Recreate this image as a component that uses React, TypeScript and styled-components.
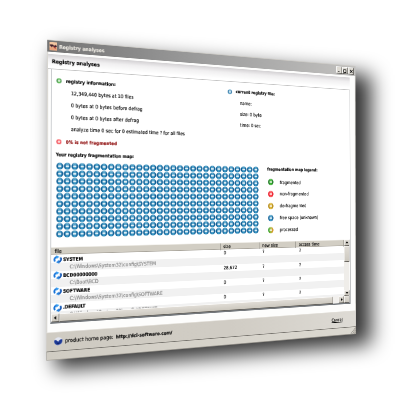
import React from "react";
import styled, { createGlobalStyle } from "styled-components";

const W = 772;
const H = 676;
const ZOOM = 0.625;

type Point = [number, number];

/* Projective transform that carries a flat w x h plane onto four corners (TL, TR, BR, BL). */
function projectTo(w: number, h: number, [p0, p1, p2, p3]: Point[]): string {
  const dx1 = p1[0] - p2[0];
  const dx2 = p3[0] - p2[0];
  const dx3 = p0[0] - p1[0] + p2[0] - p3[0];
  const dy1 = p1[1] - p2[1];
  const dy2 = p3[1] - p2[1];
  const dy3 = p0[1] - p1[1] + p2[1] - p3[1];
  const det = dx1 * dy2 - dx2 * dy1;
  const g = (dx3 * dy2 - dx2 * dy3) / det;
  const k = (dx1 * dy3 - dx3 * dy1) / det;
  const a = p1[0] - p0[0] + g * p1[0];
  const b = p3[0] - p0[0] + k * p3[0];
  const d = p1[1] - p0[1] + g * p1[1];
  const e = p3[1] - p0[1] + k * p3[1];
  const m = [
    a / w, d / w, 0, g / w,
    b / h, e / h, 0, k / h,
    0, 0, 1, 0,
    p0[0], p0[1], 0, 1,
  ];
  return `matrix3d(${m.map((n) => n.toFixed(9)).join(",")})`;
}

const planeTransform = projectTo(W * ZOOM, H * ZOOM, [
  [47.2, 39.4],
  [355.2, 66],
  [355.7, 333.6],
  [46.3, 360.4],
]);

const GlobalStyle = createGlobalStyle`
  html, body { margin: 0; background: #fff; }
  * { box-sizing: border-box; }
`;

const Stage = styled.main`
  position: relative;
  width: 400px;
  height: 400px;
  overflow: hidden;
  background: #fff;
  font-family: "DejaVu Sans Condensed", "DejaVu Sans", sans-serif;
  font-stretch: condensed;
`;

const ShadowBlur = styled.div`
  position: absolute;
  inset: 0;
  filter: blur(10px);
`;

const ShadowShape = styled.div`
  width: 400px;
  height: 400px;
  background: rgba(0, 0, 0, 0.8);
  clip-path: polygon(54px 49px, 371px 75px, 371px 344px, 55px 370px);
`;

const Plane = styled.div`
  position: absolute;
  top: 0;
  left: 0;
  width: ${W * ZOOM}px;
  height: ${H * ZOOM}px;
  transform-origin: 0 0;
  transform: ${planeTransform};
`;

const AppWindow = styled.section`
  zoom: ${ZOOM};
  width: ${W}px;
  height: ${H}px;
  display: flex;
  flex-direction: column;
  background: #fdfdfc;
  box-shadow: inset 2px 0 #d9d7d1, inset -2px 0 #dcdad4;
  color: #000;
  font-size: 11px;
  line-height: 14px;
  white-space: nowrap;
  text-rendering: geometricPrecision;
  -webkit-text-stroke: 0.25px;
`;

const TitleBar = styled.header`
  flex: none;
  height: 26px;
  display: flex;
  align-items: center;
  gap: 4px;
  padding: 0 4px;
  border-top: 1px solid #c9c7c2;
  background: linear-gradient(90deg, #747474, #a0a0a0 50%, #c2c1bf);
  color: #e9e6df;
`;

const Label = styled.span<{ $bold?: boolean; $size?: number; $color?: string }>`
  padding-top: 2px;
  font-weight: ${(p) => (p.$bold ? 700 : 400)};
  font-size: ${(p) => p.$size ?? 11}px;
  color: ${(p) => p.$color ?? "inherit"};
`;

const WindowButtons = styled.div`
  margin-left: auto;
  display: flex;
  gap: 1px;
`;

const Bevel = styled.div`
  width: 17px;
  height: 18px;
  display: grid;
  place-items: center;
  background: #dedbd4;
  border: 2px solid;
  border-color: #fff #55534e #55534e #fff;
`;

const PageHeader = styled.div`
  flex: none;
  height: 31px;
  margin: 5px 17px 0 1px;
  display: flex;
  align-items: center;
  padding-left: 9px;
  border-bottom: 2px solid #c4c4c4;
  background: linear-gradient(#d3d1d3, #f0eff0 35%, #fff 85%);
`;

const Panel = styled.div`
  flex: none;
  height: 538px;
  margin: 0 15px 0 8px;
  display: flex;
  flex-direction: column;
  border-left: 2px solid #b9bcc0;
  border-right: 3px solid #8b8e91;
  border-bottom: 4px solid #74787c;
  background: #fff;
`;

const InfoRow = styled.div`
  height: 172px;
  display: grid;
  grid-template-columns: 399px 1fr;
  padding: 11px 0 0 9px;
`;

const InfoColumn = styled.div`
  display: flex;
  flex-direction: column;
`;

const InfoTitle = styled.div`
  height: 26px;
  display: flex;
  align-items: center;
  gap: 9px;
`;

const InfoLine = styled.div`
  height: 25.8px;
  line-height: 27.5px;
  padding-left: 32px;
`;

const MapHeading = styled.div`
  height: 25px;
  line-height: 21px;
  padding-left: 9px;
`;

const MapRow = styled.div`
  height: 180px;
  display: grid;
  grid-template-columns: 480px 1fr;
  column-gap: 22px;
  padding-left: 10px;
`;

const MapGrid = styled.div`
  display: grid;
  grid-template-columns: repeat(30, 16px);
  grid-auto-rows: 16px;
  height: 160px;
`;

const Legend = styled.div`
  display: flex;
  flex-direction: column;
`;

const LegendItem = styled.div`
  height: 28.5px;
  display: flex;
  align-items: center;
  gap: 17px;
  padding-left: 1px;
`;

const LegendTitle = styled(LegendItem)`
  height: 24px;
  align-items: flex-start;
  padding-left: 0;
`;

const FileList = styled.div`
  flex: none;
  height: 159px;
  display: grid;
  grid-template-columns: 728px 16px;
  grid-template-rows: 142px 17px;
`;

const Table = styled.div`
  overflow: hidden;
`;

const columns = "390px 101px 100px 137px";

const TableHead = styled.div`
  height: 17px;
  display: grid;
  grid-template-columns: ${columns};
  background: #d2cec4;
  border-top: 1px solid #f0eee9;
  border-bottom: 1px solid #aaa69d;
`;

const HeadCell = styled.div`
  padding-left: 7px;
  line-height: 17px;
  border-right: 2px solid #98958d;
`;

const TableRow = styled.div<{ $alt?: boolean }>`
  height: 17px;
  line-height: 18px;
  display: grid;
  grid-template-columns: ${columns};
  background: ${(p) => (p.$alt ? "#f1f1f1" : "#fff")};
`;

const NameCell = styled.div`
  display: flex;
  align-items: center;
  gap: 3px;
  padding-left: 4px;
`;

const PathCell = styled.div`
  padding-left: 39px;
  font-size: 11.3px;
`;

const ValueCell = styled.div`
  padding-left: 8px;
`;

const VScroll = styled.div`
  display: grid;
  grid-template-rows: 16px 40px 1fr 15px;
  background: #efede9;
`;

const HScroll = styled.div`
  display: grid;
  grid-template-columns: 17px 679px 1fr 16px;
  background: #f2f0ed;
`;

const ScrollPart = styled.div`
  display: grid;
  place-items: center;
  background: linear-gradient(#e0dcd5, #ccc8bf);
  border: 1px solid;
  border-color: #faf9f7 #65625c #65625c #faf9f7;
  border-right-width: 2px;
`;

const Footer = styled.footer`
  flex: none;
  height: 41px;
  margin-top: 17px;
  display: flex;
  align-items: center;
  padding: 0 39px 2px 16px;
  background: linear-gradient(90deg, #cfcbc2, #d0ccc4 55%, #dedbd5);
  border-top: 1px solid #e4e1db;
`;

const HomeLink = styled.div`
  display: flex;
  align-items: center;
  gap: 5px;
`;

const CancelLink = styled.a`
  margin-left: auto;
  padding-top: 2px;
  font-size: 10.5px;
  text-decoration: underline;
`;

const StatusBar = styled.div`
  flex: 1;
  display: flex;
  justify-content: flex-end;
  align-items: flex-end;
  background: linear-gradient(90deg, #d0ccc3, #dcd9d1);
  border: 2px solid #aaa69e;
  border-top-color: #77746e;
`;

const palette = {
  blue: ["#0a5a92", "#3fa0cc", "#0a5a92"],
  green: ["#126f19", "#36bd28", "#126f19"],
  red: ["#e80f20", "#ff4a4c", "#e80f20"],
  gold: ["#ad8008", "#e4bd32", "#ad8008"],
  mixed: ["#259a24", "#a9bd32", "#dc8920"],
};

type Tone = keyof typeof palette;

function Orb({ tone, size = 16, soft }: { tone: Tone; size?: number; soft?: boolean }) {
  const [left, mid, right] = palette[tone];
  const id = `orb-${tone}`;
  return (
    <svg width={size} height={size} viewBox="0 0 16 16" opacity={soft ? 0.75 : 1}>
      <defs>
        <linearGradient id={id}>
          <stop offset="0.1" stopColor={left} />
          <stop offset="0.5" stopColor={mid} />
          <stop offset="0.9" stopColor={right} />
        </linearGradient>
      </defs>
      <circle cx="8" cy="8" r="7.3" fill={`url(#${id})`} />
      <rect x="4.5" y="6" width="7" height="4" rx="1" fill="#fff" fillOpacity="0.85" />
      <path d="M4.500 4.500c1-2 6-2 7 0" fill="none" stroke="#fff" strokeOpacity="0.35" strokeWidth="1.500" />
    </svg>
  );
}

function AppIcon() {
  return (
    <svg width="17" height="17" viewBox="0 0 16 16">
      <rect width="16" height="16" fill="#f2c5a0" />
      <path d="M0 12c4-3 9-3 16 0v4H0z" fill="#e8a37c" />
      <path d="M1 5h6l2 2 4-2 2 4-5 1-3-2-3 2-3-3z" fill="#40202c" />
      <path d="M9 8l4 3-1 2-4-3z" fill="#a22d2d" />
    </svg>
  );
}

function RefreshIcon() {
  return (
    <svg width="18" height="18" viewBox="0 0 16 16">
      <path d="M3 11.500A5.300 5.300 0 0 1 6 3" fill="none" stroke="#1673d8" strokeWidth="3.2" />
      <path d="M13 4.500A5.300 5.300 0 0 1 10 13" fill="none" stroke="#1558b5" strokeWidth="3.2" />
      <path d="M5 0l6 3-5 4z" fill="#3aa0f2" />
      <path d="M11 16l-6-3 5-4z" fill="#2583df" />
    </svg>
  );
}

function HomeIcon() {
  return (
    <svg width="18" height="18" viewBox="0 0 16 16">
      <circle cx="8" cy="8" r="7.6" fill="#e1e5f0" />
      <path d="M.5 6C3 4 5 6 8 9c2-3 4-5 7.500-4 1 6-3 10-7.500 10S-.5 12 .5 6z" fill="#1d3995" />
      <path d="M4 10c2 2 5 2 7 0l-3 4z" fill="#0c1d60" />
    </svg>
  );
}

function Glyph({ d }: { d: string }) {
  return (
    <svg width="10" height="10" viewBox="0 0 10 10">
      <path d={d} fill="none" stroke="#111" strokeWidth="2" />
    </svg>
  );
}

function Arrow({ turn }: { turn: number }) {
  return (
    <svg width="8" height="8" viewBox="0 0 8 8">
      <path d="M4 1l4 5H0z" fill="#000" transform={`rotate(${turn} 4 4)`} />
    </svg>
  );
}

const registryLines = [
  "12,349,440 bytes at 10 files",
  "0 bytes at 0 bytes before defrag",
  "0 bytes at 0 bytes after defrag",
  "analyze time 0 sec for 0 estimated time ? for all files",
];

const fileLines = ["name:", "size: 0  byte", "time: 0  sec"];

const legend: [Tone, string][] = [
  ["green", "fragmented"],
  ["red", "non-fragmented"],
  ["gold", "de-fragmented"],
  ["blue", "free space (unknown)"],
  ["mixed", "processed"],
];

const files = [
  { name: "SYSTEM", path: "C:\\Windows\\System32\\config\\SYSTEM", size: "0" },
  { name: "BCD00000000", path: "C:\\Boot\\BCD", size: "28,672" },
  { name: "SOFTWARE", path: "C:\\Windows\\System32\\config\\SOFTWARE", size: "0" },
  { name: ".DEFAULT", path: "C:\\Windows\\System32\\config\\DEFAULT", size: "0" },
];

export default function App() {
  return (
    <Stage>
      <GlobalStyle />
      <ShadowBlur>
        <ShadowShape />
      </ShadowBlur>
      <Plane>
        <AppWindow>
          <TitleBar>
            <AppIcon />
            <Label $bold>Registry analyses</Label>
            <WindowButtons>
              <Bevel><Glyph d="M2 8h5" /></Bevel>
              <Bevel><Glyph d="M1 2h8M1.500 2v7h7V2" /></Bevel>
              <Bevel><Glyph d="M1.500 1.500l7 7M8.500 1.500l-7 7" /></Bevel>
            </WindowButtons>
          </TitleBar>
          <PageHeader>
            <Label $bold $size={11.5}>Registry analyses</Label>
          </PageHeader>
          <Panel>
            <InfoRow>
              <InfoColumn>
                <InfoTitle>
                  <Orb tone="green" size={12} soft />
                  <Label $bold $size={10.3}>registry information:</Label>
                </InfoTitle>
                {registryLines.map((line) => (
                  <InfoLine key={line}>{line}</InfoLine>
                ))}
                <InfoTitle>
                  <Orb tone="red" size={12} soft />
                  <Label $bold $size={10.3} $color="#8c0707">0% is not fragmented</Label>
                </InfoTitle>
              </InfoColumn>
              <InfoColumn>
                <InfoTitle>
                  <Orb tone="blue" size={12} soft />
                  <Label $bold $size={10.1}>current registry file:</Label>
                </InfoTitle>
                {fileLines.map((line) => (
                  <InfoLine key={line}>{line}</InfoLine>
                ))}
              </InfoColumn>
            </InfoRow>
            <MapHeading>
              <Label $bold $size={10.1}>Your registry fragmentation map:</Label>
            </MapHeading>
            <MapRow>
              <MapGrid>
                {Array.from({ length: 300 }, (_, i) => (
                  <Orb key={i} tone="blue" />
                ))}
              </MapGrid>
              <Legend>
                <LegendTitle>
                  <Label $bold $size={10}>fragmentation map legend:</Label>
                </LegendTitle>
                {legend.map(([tone, text]) => (
                  <LegendItem key={text}>
                    <Orb tone={tone} />
                    <Label>{text}</Label>
                  </LegendItem>
                ))}
              </Legend>
            </MapRow>
            <FileList>
              <Table>
                <TableHead>
                  <HeadCell>file</HeadCell>
                  <HeadCell>size</HeadCell>
                  <HeadCell>new size</HeadCell>
                  <HeadCell>access time</HeadCell>
                </TableHead>
                {files.map((f) => (
                  <React.Fragment key={f.name}>
                    <TableRow>
                      <NameCell>
                        <RefreshIcon />
                        <Label $bold $size={10.5}>{f.name}</Label>
                      </NameCell>
                      <ValueCell>{f.size}</ValueCell>
                      <ValueCell>?</ValueCell>
                      <ValueCell>?</ValueCell>
                    </TableRow>
                    <TableRow $alt>
                      <PathCell>
                        <Label $size={11.4} $color="#888">{f.path}</Label>
                      </PathCell>
                    </TableRow>
                  </React.Fragment>
                ))}
              </Table>
              <VScroll>
                <ScrollPart><Arrow turn={0} /></ScrollPart>
                <ScrollPart />
                <div />
                <ScrollPart><Arrow turn={180} /></ScrollPart>
              </VScroll>
              <HScroll>
                <ScrollPart><Arrow turn={-90} /></ScrollPart>
                <ScrollPart />
                <div />
                <ScrollPart><Arrow turn={90} /></ScrollPart>
              </HScroll>
              <ScrollPart />
            </FileList>
          </Panel>
          <Footer>
            <HomeLink>
              <HomeIcon />
              <Label $size={11.6}>product home page:</Label>
              <Label $bold $size={10.7}>http://dci-software.com/</Label>
            </HomeLink>
            <CancelLink>Cancel</CancelLink>
          </Footer>
          <StatusBar>
            <svg width="14" height="14" viewBox="0 0 14 14">
              <path d="M1 14L14 1M6 14l8-8M11 14l3-3" stroke="#8c8981" strokeWidth="1.500" />
            </svg>
          </StatusBar>
        </AppWindow>
      </Plane>
    </Stage>
  );
}
